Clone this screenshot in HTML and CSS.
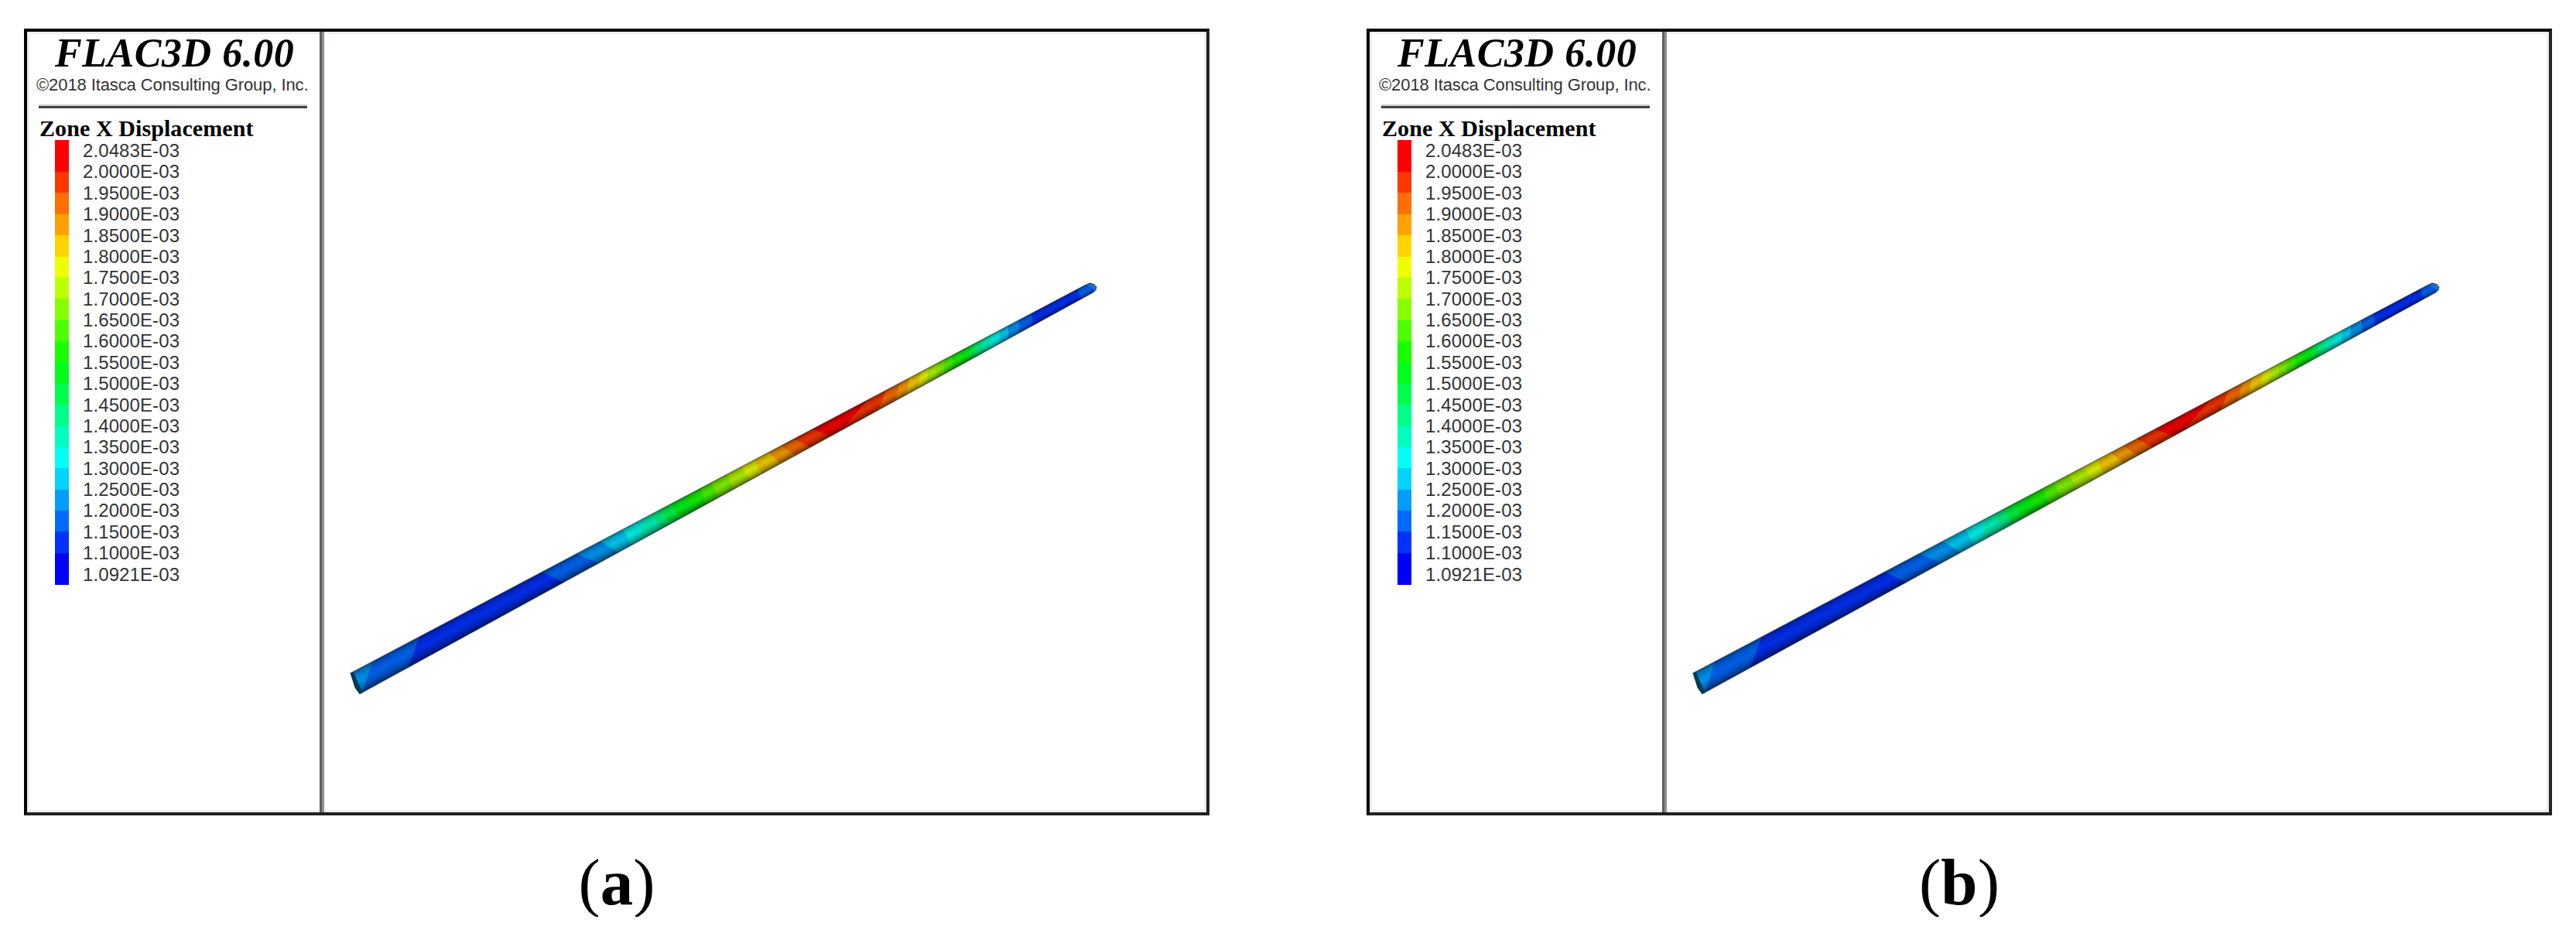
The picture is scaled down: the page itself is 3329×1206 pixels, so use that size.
FILE: index.html
```html
<!DOCTYPE html>
<html lang="en">
<head>
  <meta charset="UTF-8" />
  <meta name="viewport" content="width=device-width, initial-scale=1.0" />
  <title>Zone X Displacement</title>
  <link rel="stylesheet" href="styles.css">
</head>
<body>
  <main class="figures">
    <figure class="figure">
      <div class="plot">
        <div class="side">
          <h2 class="product">FLAC3D 6.00</h2>
          <p class="copyright">©2018 Itasca Consulting Group, Inc.</p>
          <div class="rule"></div>
          <h3 class="heading">Zone X Displacement</h3>
          <div class="legend">
            <div class="scale"></div>
            <ul class="labels"></ul>
          </div>
        </div>
        <svg class="view" viewBox="419 41 1140 1009"></svg>
      </div>
      <figcaption>(<b>a</b>)</figcaption>
    </figure>

    <figure class="figure">
      <div class="plot">
        <div class="side">
          <h2 class="product">FLAC3D 6.00</h2>
          <p class="copyright">©2018 Itasca Consulting Group, Inc.</p>
          <div class="rule"></div>
          <h3 class="heading">Zone X Displacement</h3>
          <div class="legend">
            <div class="scale"></div>
            <ul class="labels"></ul>
          </div>
        </div>
        <svg class="view" viewBox="419 41 1140 1009"></svg>
      </div>
      <figcaption>(<b>b</b>)</figcaption>
    </figure>
  </main>

  <script>
    const colors = [
      '#ff0000', '#ff3700', '#ff7000', '#ffa200', '#ffd500', '#eeff00', '#bbff00',
      '#88ff00', '#4dff00', '#18ff00', '#00ff1a', '#00ff4c', '#00ff88', '#00ffbf',
      '#00fff5', '#00d4ff', '#009dff', '#006aff', '#0033ff', '#0000ff'
    ];

    const values = [
      '2.0483', '2.0000', '1.9500', '1.9000', '1.8500', '1.8000', '1.7500',
      '1.7000', '1.6500', '1.6000', '1.5500', '1.5000', '1.4500', '1.4000',
      '1.3500', '1.3000', '1.2500', '1.2000', '1.1500', '1.1000', '1.0921'
    ];

    // contour bands along the pipe: [color index, x on upper edge, x on lower edge] where the band ends
    const bands = [
      [16, 482, 470], [17, 543, 528], [18, 702, 729], [17, 746, 775],
      [16, 777, 800], [15, 806, 817], [14, 832, 829], [13, 842, 857],
      [12, 856, 866], [11, 868, 880], [10, 886, 902], [9, 906, 914],
      [8, 920, 930], [7, 940, 950], [6, 959, 970], [5, 976, 985],
      [4, 994, 1010], [3, 1010, 1029], [2, 1027, 1048], [1, 1050, 1076],
      [0, 1123, 1088], [1, 1146, 1136], [2, 1164, 1158], [3, 1176, 1172],
      [4, 1190, 1188], [5, 1201, 1198], [6, 1212, 1210], [7, 1222, 1221],
      [8, 1232, 1232], [9, 1245, 1244], [10, 1254, 1254], [11, 1261, 1262],
      [12, 1269, 1270], [13, 1281, 1280], [14, 1293, 1292], [15, 1304, 1304],
      [16, 1318, 1318], [17, 1334, 1335], [18, 1394, 1398], [17, 1425, 1425]
    ];

    // shading strips across the pipe: [from, to, darkness]
    const shades = [
      [0, 0.1, 0.36], [0.1, 0.22, 0.2], [0.22, 0.36, 0.1], [0.36, 0.54, 0.04],
      [0.54, 0.66, 0.1], [0.66, 0.78, 0.2], [0.78, 0.9, 0.34], [0.9, 1, 0.5]
    ];

    const upper = x => 870 - (x - 453) * 0.5283;
    const lower = x => 897 - (x - 465) * 0.5475;

    function drawPipe(id) {
      const outline = '453,870 1402,368.6 1408,366 1413,367 1417,371 1416,375 1412,378.5 465,897 459,889';
      let out = `<clipPath id="${id}"><polygon points="${outline}"/></clipPath><g clip-path="url(#${id})">`;

      let u = 440, l = 440;
      for (const [c, u2, l2] of bands) {
        // one pixel of overlap hides the seams
        out += `<polygon fill="${colors[c]}" points="${u - 1},${upper(u - 1)} ${u2},${upper(u2)} ${l2},${lower(l2)} ${l - 1},${lower(l - 1)}"/>`;
        u = u2;
        l = l2;
      }

      for (const [a, b, dark] of shades) {
        const at = t => [453 + 12 * t, 870 + 27 * t, 1410 + 4 * t, 364.5 + 13 * t];
        const [x1, y1, x2, y2] = at(a);
        const [x3, y3, x4, y4] = at(b);
        out += `<polygon fill="#000" fill-opacity="${dark}" points="${x1},${y1} ${x2},${y2} ${x4},${y4} ${x3},${y3}"/>`;
      }

      out += `<polygon class="dim" points="${outline}"/>`;
      out += '<polygon class="far-end" points="1404,368 1411,365 1420,370 1418,376"/>';
      out += '<path class="near-end" d="M453 870 L465 897"/></g>';
      return out + `<polygon class="edge" points="${outline}"/>`;
    }

    document.querySelectorAll('.scale').forEach(el => {
      el.innerHTML = colors.map(c => `<span style="background:${c}"></span>`).join('');
    });
    document.querySelectorAll('.labels').forEach(el => {
      el.innerHTML = values.map(v => `<li>${v}E-03</li>`).join('');
    });
    document.querySelectorAll('.view').forEach((el, i) => {
      el.innerHTML = drawPipe('pipe' + i);
    });
  </script>
</body>
</html>
```
FILE: styles.css
```css
* {
  box-sizing: border-box;
  margin: 0;
  padding: 0;
}

body {
  background: #fff;
  color: #000;
  font-family: "Liberation Sans", Arial, sans-serif;
}

.figures {
  display: flex;
  gap: 203px;
  padding: 37px 31px 0;
}

.figure {
  width: 1532px;
}

.plot {
  display: flex;
  height: 1017px;
  border: 4px solid #000;
  border-right-color: #222;
  border-bottom-color: #222;
  box-shadow: inset 0 0 0 3px #ededed;
}

.side {
  width: 384px;
  padding: 1px 0 0 12px;
  border-right: 3px solid #8f9090;
  box-shadow: inset -3px 0 #606262;
}

.product {
  padding-left: 24px;
  font: italic bold 52px/54px "Liberation Serif", "Times New Roman", serif;
  letter-spacing: 0.55px;
  white-space: nowrap;
}

.copyright {
  margin-top: 1px;
  font-size: 22px;
  line-height: 26px;
  letter-spacing: -0.1px;
  color: #333;
  white-space: nowrap;
}

.rule {
  width: 347px;
  height: 5px;
  margin: 12px 0 11px 3px;
  background: #444;
  border-top: 2px solid #ccc;
}

.heading {
  padding-left: 4px;
  font: bold 30px/30px "Liberation Serif", "Times New Roman", serif;
  letter-spacing: 0.08px;
  white-space: nowrap;
}

.legend {
  display: flex;
  gap: 18px;
  height: 575px;
  padding-left: 22px;
}

.scale {
  display: flex;
  flex-direction: column;
  width: 20px;
  border-left: 2px solid #fff;
}

.scale span {
  flex: 1;
}

.scale span:first-child,
.scale span:last-child {
  flex: 1.5;
}

.labels {
  list-style: none;
  font-size: 24px;
  line-height: 27.38px;
  letter-spacing: 0.1px;
  color: #333;
}

.view {
  display: block;
  width: 1140px;
  height: 1009px;
}

.dim {
  fill: #000;
  fill-opacity: 0.08;
}

.edge {
  fill: none;
  stroke: #000;
  stroke-opacity: 0.35;
  stroke-width: 1.5;
}

.near-end {
  fill: none;
  stroke: #003a55;
  stroke-width: 8;
}

.far-end {
  fill: #2a85c4;
  fill-opacity: 0.6;
}

figcaption {
  margin-top: 41px;
  font: 85px/90px "Liberation Serif", "Times New Roman", serif;
  text-align: center;
}
```
